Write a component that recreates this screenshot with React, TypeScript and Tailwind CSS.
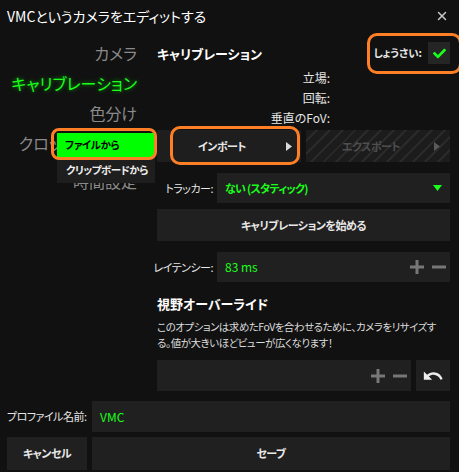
import { X } from "lucide-react";
import { FaCheck } from "react-icons/fa";
import { MdUndo } from "react-icons/md";

function PlayArrow({ color = "#d8d8d8" }: { color?: string }) {
  return (
    <svg width="6" height="9" viewBox="0 0 6 9">
      <polygon points="0,0 6,4.5 0,9" fill={color} />
    </svg>
  );
}

function PlusMinus() {
  return (
    <div className="flex items-center gap-[8px]">
      <svg width="14" height="14" viewBox="0 0 14 14">
        <path d="M7 0v14M0 7h14" stroke="#777" strokeWidth="3" />
      </svg>
      <svg width="14" height="14" viewBox="0 0 14 14">
        <path d="M0 7h14" stroke="#777" strokeWidth="3" />
      </svg>
    </div>
  );
}

const navItems = [
  { label: "カメラ", active: false },
  { label: "キャリブレーション", active: true },
  { label: "色分け", active: false },
  { label: "クロッピング設定", active: false },
];

export default function App() {
  return (
    <div className="relative w-[459px] h-[472px] overflow-hidden whitespace-nowrap bg-[#111111] text-[#e6e6e6] font-['Noto_Sans_CJK_JP',sans-serif] [font-feature-settings:'palt']">
      <header className="h-8 flex items-center justify-between pl-[7px] pr-[10px]">
        <span className="text-[14px] leading-none text-white">VMCというカメラをエディットする</span>
        <X className="w-[14px] h-[14px] text-[#c8c8c8]" strokeWidth={2.5} />
      </header>

      <div className="flex pr-[9px]">
        <nav className="w-[157px] pr-[20px] pt-[6px] flex flex-col items-end">
          {navItems.map((item) => (
            <div
              key={item.label}
              className={`h-[30px] flex items-center text-[16px] leading-none ${
                item.active
                  ? "text-[#1aff1a] [text-shadow:0_0_4px_rgba(0,255,0,0.6)]"
                  : "text-[#8a8a8a]"
              }`}
            >
              {item.label}
            </div>
          ))}
          <div className="mt-[8px] h-[30px] flex items-center text-[16px] leading-none text-[#8a8a8a]">
            時間設定
          </div>
        </nav>

        <section className="flex-1 flex flex-col pt-[8px]">
          <div className="h-[26px] flex items-center justify-between">
            <h2 className="text-[13px] font-bold leading-none text-white">キャリブレーション</h2>
            <div className="flex items-center gap-[6px]">
              <span className="text-[10.5px] font-bold leading-none">しょうさい:</span>
              <div className="w-[22px] h-[22px] bg-[#252525] flex items-center justify-center">
                <FaCheck className="w-[13px] h-[13px] text-[#1aff1a]" />
              </div>
            </div>
          </div>

          <div className="mt-[2px] flex flex-col text-[12px] leading-none">
            <div className="h-5 w-[173px] flex items-center justify-end">立場:</div>
            <div className="h-5 w-[173px] flex items-center justify-end">回転:</div>
            <div className="h-5 w-[173px] flex items-center justify-end">垂直のFoV:</div>
          </div>

          <div className="mt-[2px] h-8 flex gap-[5px] text-[11px] tracking-[-0.5px] font-bold leading-none">
            <button className="relative flex-1 bg-[#1e1e1e] flex items-center justify-center pr-[14px] text-[#e6e6e6]">
              インポート
              <span className="absolute right-[9px] top-[12px]">
                <PlayArrow />
              </span>
            </button>
            <button className="relative flex-1 flex items-center justify-center pr-[14px] text-[#4e4e4e] [background-image:repeating-linear-gradient(135deg,#1c1c1c_0px,#1c1c1c_7px,#2a2a2a_7px,#2a2a2a_9px)]">
              エクスポート
              <span className="absolute right-[10px] top-[12px]">
                <PlayArrow color="#5a5a5a" />
              </span>
            </button>
          </div>

          <div className="mt-[11px] h-[30px] flex">
            <label className="w-[60px] pr-[4px] flex items-center justify-end text-[11px] tracking-[-0.5px] leading-none">
              トラッカー:
            </label>
            <div className="flex-1 bg-[#202020] flex items-center justify-between pl-[8px] pr-[8px]">
              <span className="text-[11px] tracking-[-0.7px] font-bold leading-none text-[#1aff1a]">ない (スタティック)</span>
              <svg width="9" height="6" viewBox="0 0 9 6">
                <polygon points="0,0 9,0 4.5,6" fill="#1aff1a" />
              </svg>
            </div>
          </div>

          <button className="mt-[6px] h-8 bg-[#202020] flex items-center justify-center text-[11px] tracking-[-0.5px] font-bold leading-none text-[#e8e8e8]">
            キャリブレーションを始める
          </button>

          <div className="mt-[11px] h-[30px] flex">
            <label className="w-[60px] pr-[4px] flex items-center justify-end text-[11px] tracking-[-0.5px] leading-none">
              レイテンシー:
            </label>
            <div className="flex-1 bg-[#202020] flex items-center justify-between pl-[8px] pr-[4px]">
              <span className="text-[12px] leading-none text-[#1aff1a]">83 ms</span>
              <PlusMinus />
            </div>
          </div>

          <h2 className="mt-[10px] h-[22px] flex items-center text-[13px] font-bold leading-none text-white">
            視野オーバーライド
          </h2>

          <p className="mt-[5px] text-[10.5px] tracking-[-0.5px] leading-[16px] text-[#dcdcdc]">
            このオプションは求めたFoVを合わせるために、カメラをリサイズす
            <br />
            る。値が大きいほどビューが広くなります！
          </p>

          <div className="mt-[9px] h-[31px] flex gap-[5px]">
            <div className="flex-1 bg-[#202020] flex items-center justify-end pr-[4px]">
              <PlusMinus />
            </div>
            <button className="w-[34px] bg-[#202020] flex items-center justify-center">
              <MdUndo className="w-[22px] h-[22px] text-[#eeeeee]" />
            </button>
          </div>
        </section>
      </div>

      <div className="mt-[10px] h-[31px] flex pl-[7px] pr-[9px]">
        <label className="w-[85px] flex items-center text-[11px] tracking-[-0.5px] leading-none">プロファイル名前:</label>
        <div className="flex-1 bg-[#202020] flex items-center pl-[8px]">
          <span className="text-[12px] leading-none text-[#1aff1a]">VMC</span>
        </div>
      </div>

      <div className="mt-[5px] h-[33px] flex gap-[5px] pl-[7px] pr-[9px] text-[11px] tracking-[-0.5px] font-bold leading-none text-[#e8e8e8]">
        <button className="w-[80px] bg-[#202020] flex items-center justify-center">キャンセル</button>
        <button className="flex-1 bg-[#202020] flex items-center justify-center">セーブ</button>
      </div>

      {/* context menu over the nav */}
      <div className="absolute left-[57px] top-[133px] w-[98px] flex flex-col text-[10.5px] tracking-[-0.5px] font-bold leading-none">
        <div className="h-[24px] bg-[#00ff00] text-black flex items-center pl-[8px]">ファイルから</div>
        <div className="h-[26px] bg-[#1e1e1e] text-[#eeeeee] flex items-center pl-[9px]">クリップボードから</div>
      </div>

      {/* highlight marks */}
      <div className="absolute left-[51px] top-[128px] w-[106px] h-[32px] border-[3px] border-[#ff7f27] rounded-[8px]" />
      <div className="absolute left-[170px] top-[126px] w-[130px] h-[39px] border-[3px] border-[#ff7f27] rounded-[10px]" />
      <div className="absolute left-[367px] top-[33px] w-[95px] h-[41px] border-[3px] border-[#ff7f27] rounded-[10px]" />
    </div>
  );
}
